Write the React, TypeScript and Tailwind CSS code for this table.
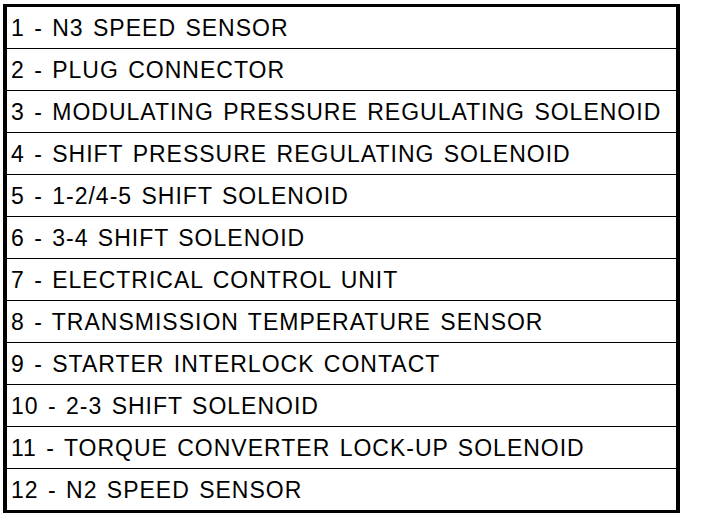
const ITEMS = [
  '1 - N3 SPEED SENSOR',
  '2 - PLUG CONNECTOR',
  '3 - MODULATING PRESSURE REGULATING SOLENOID',
  '4 - SHIFT PRESSURE REGULATING SOLENOID',
  '5 - 1-2/4-5 SHIFT SOLENOID',
  '6 - 3-4 SHIFT SOLENOID',
  '7 - ELECTRICAL CONTROL UNIT',
  '8 - TRANSMISSION TEMPERATURE SENSOR',
  '9 - STARTER INTERLOCK CONTACT',
  '10 - 2-3 SHIFT SOLENOID',
  '11 - TORQUE CONVERTER LOCK-UP SOLENOID',
  '12 - N2 SPEED SENSOR',
];

export default function App() {
  return (
    <div className="w-[704px] h-[522px] bg-white pt-[4px] pl-[3px]">
      <div className="w-[677px] border-x-4 border-y-[3px] border-black bg-white font-['Liberation_Sans',Arial,sans-serif] text-black">
        {ITEMS.map((label, i) => (
          <div
            key={label}
            className={[
              'flex items-center pl-[4px] pt-[2px] text-[23px] leading-none tracking-[1px] [word-spacing:2px]',
              i < ITEMS.length - 1 ? 'h-[42px] border-b border-black' : 'h-[41px]',
            ].join(' ')}
          >
            {label}
          </div>
        ))}
      </div>
    </div>
  );
}
